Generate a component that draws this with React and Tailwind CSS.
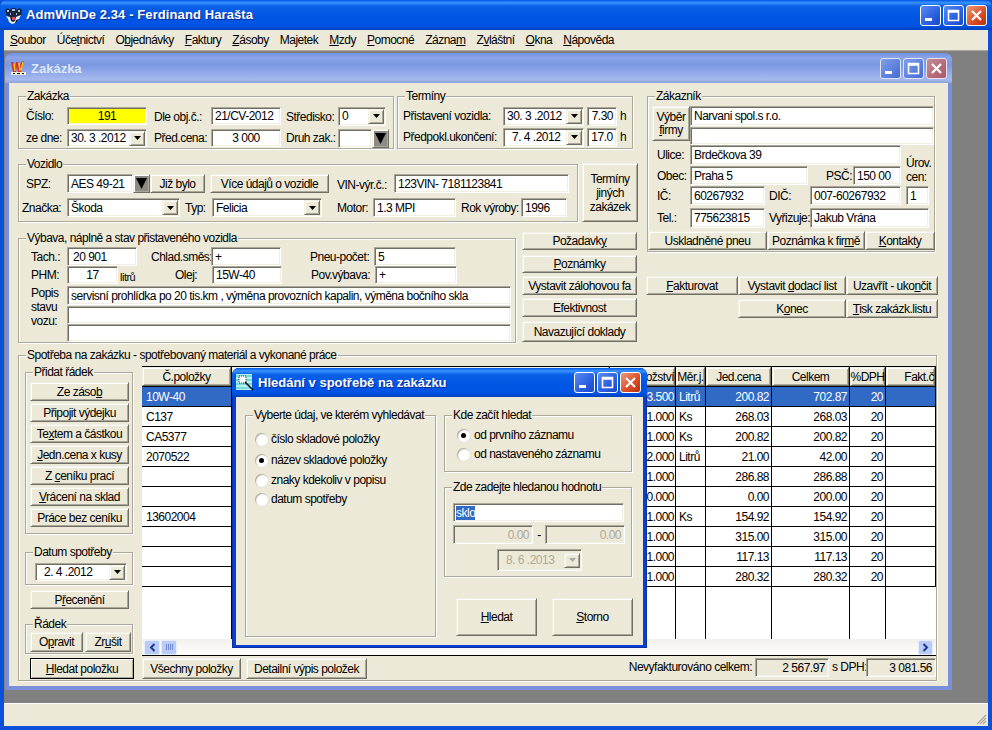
import React from "react";

// classic XP edges
const SUNKEN = "border border-t-[#aca899] border-l-[#aca899] border-r-white border-b-white shadow-[inset_1px_1px_0_#716f64,inset_-1px_-1px_0_#f1efe2]";
const RAISED = "border border-t-[#f1efe2] border-l-[#f1efe2] border-r-[#716f64] border-b-[#716f64] shadow-[inset_1px_1px_0_#fff,inset_-1px_-1px_0_#aca899]";

const Lbl = ({ className = "", children }) => (
  <span className={`shrink-0 whitespace-nowrap ${className}`}>{children}</span>
);

const U = ({ children }) => <span className="underline underline-offset-1">{children}</span>;

const Field = ({ className = "", children }) => (
  <div className={`shrink-0 flex items-center px-[3px] whitespace-nowrap overflow-hidden ${SUNKEN} ${className}`}>
    {children}
  </div>
);

const Btn = ({ className = "", children }) => (
  <div className={`shrink-0 flex items-center justify-center text-center whitespace-nowrap bg-[#ece9d8] ${RAISED} ${className}`}>
    {children}
  </div>
);

const Arrow = ({ gray }) => (
  <svg width="7" height="4" viewBox="0 0 7 4"><path d="M0 0h7L3.5 4z" fill={gray ? "#aca899" : "#000"} /></svg>
);

// field with the small drop-down button on its right
const Combo = ({ className = "", gray, children }) => (
  <div className={`shrink-0 flex items-center pl-[3px] pr-[1px] whitespace-nowrap bg-white ${SUNKEN} ${className}`}>
    <span className="flex-1">{children}</span>
    <div className={`w-[16px] h-[15px] flex items-center justify-center bg-[#ece9d8] ${RAISED}`}>
      <Arrow gray={gray} />
    </div>
  </div>
);

const BlackDrop = () => (
  <div className={`shrink-0 w-[17px] h-[19px] flex items-center justify-center bg-[#8c8a82] ${RAISED}`}>
    <svg width="11" height="11" viewBox="0 0 11 11"><path d="M0 0h11L5.5 11z" fill="#000" /></svg>
  </div>
);

const Group = ({ title, className = "", children }) => (
  <div className={`relative shrink-0 border border-[#aca899] shadow-[1px_1px_0_#fff,inset_1px_1px_0_#fff] ${className}`}>
    <span className="absolute left-[7px] top-[-8px] bg-[#ece9d8] px-[1px] leading-[14px] whitespace-nowrap">{title}</span>
    {children}
  </div>
);

const CapBtn = ({ kind, tone }) => {
  const bg = {
    blue: "bg-[linear-gradient(135deg,#5b8cf2,#2a5fe0_60%,#1c46c8)] border-white",
    red: "bg-[linear-gradient(135deg,#ee9a78,#db4a26_60%,#b8300f)] border-white",
    dimBlue: "bg-[linear-gradient(135deg,#7fa0ea,#5c80dc_60%,#4a6ad0)] border-[#dfe6f8]",
    dimRed: "bg-[linear-gradient(135deg,#c58d98,#b56a78_60%,#a65a6c)] border-[#e8dfe8]",
  }[tone];
  return (
    <div className={`w-[21px] h-[21px] rounded-[3px] border flex items-center justify-center ${bg}`}>
      <svg width="13" height="13" viewBox="0 0 13 13">
        {kind === "min" && <rect x="1" y="9" width="7" height="3" fill="#fff" />}
        {kind === "max" && <path d="M1.5 1.5h10v10h-10zM1.5 3h10" stroke="#fff" strokeWidth="1.6" fill="none" />}
        {kind === "close" && <path d="M2 2l9 9M11 2l-9 9" stroke="#fff" strokeWidth="2.2" />}
      </svg>
    </div>
  );
};

const CapBtns = ({ dim }) => (
  <div className="ml-auto flex gap-[2px]">
    <CapBtn kind="min" tone={dim ? "dimBlue" : "blue"} />
    <CapBtn kind="max" tone={dim ? "dimBlue" : "blue"} />
    <CapBtn kind="close" tone={dim ? "dimRed" : "red"} />
  </div>
);

const AppIcon = () => (
  <svg width="17" height="17" viewBox="0 0 17 17" className="shrink-0">
    <path d="M0 3l3-2 2 2 2-2h3l2 2 2-2 3 2-1 6-3 2-1 4-3 1-3-1-1-4-3-2z" fill="#1c2438" />
    <path d="M2 3h2v2H2zM7 2h3v2H7zM13 3h2v2h-2zM5 6h1v2H5zM11 6h1v2h-1z" fill="#9fc0f0" />
    <path d="M1 9l4 1 1 4 2 1 2-1 1-4 5-2-2 4-3 1-1 3-3 1-3-2-1-3z" fill="#eef2fa" />
    <path d="M7 10h3v3H7z" fill="#d05068" />
  </svg>
);

const WIcon = () => (
  <svg width="17" height="16" viewBox="0 0 17 16" className="shrink-0">
    <path d="M1 2l2 10h3l1-6 1 6h3l3-11-3 1-2 6-1-6H6L5 9 3 2z" fill="#d8301c" />
    <path d="M4 4l1 7M9 3l1 8M13 2l-2 8" stroke="#f8c820" strokeWidth="1.4" />
    <path d="M1 12h15v3H1z" fill="#f4f0d8" />
    <path d="M3 13h2v1H3zM7 13h3v1H7zM12 13h2v1h-2z" fill="#111" />
  </svg>
);

const WandIcon = () => (
  <svg width="18" height="18" viewBox="0 0 18 18" className="shrink-0">
    <rect x="0" y="0" width="16" height="16" fill="#b8f0f0" />
    <path d="M0 2h16M0 6h16M0 10h16M0 14h16" stroke="#30c0c8" strokeWidth="1" />
    <path d="M3 2h7v7H3z" fill="#fff" stroke="#333" strokeWidth="1" strokeDasharray="1 1" />
    <path d="M9 8l8 8" stroke="#000" strokeWidth="1.4" />
  </svg>
);

const Radio = ({ on }) => (
  <div className="shrink-0 w-[13px] h-[13px] rounded-full bg-white flex items-center justify-center shadow-[inset_1px_1px_1px_#aca899,0_0_1px_#d8d4c4]">
    {on && <div className="w-[5px] h-[5px] rounded-full bg-black" />}
  </div>
);

const COLS = "grid grid-cols-[90px_378px_66px_30px_66px_78px_36px_50px]";

const ROWS = [
  ["10W-40", "3.500", "Litrů", "200.82", "702.87", "20"],
  ["C137", "1.000", "Ks", "268.03", "268.03", "20"],
  ["CA5377", "1.000", "Ks", "200.82", "200.82", "20"],
  ["2070522", "2.000", "Litrů", "21.00", "42.00", "20"],
  ["", "1.000", "", "286.88", "286.88", "20"],
  ["", "0.000", "", "0.00", "200.00", "20"],
  ["13602004", "1.000", "Ks", "154.92", "154.92", "20"],
  ["", "1.000", "", "315.00", "315.00", "20"],
  ["", "1.000", "", "117.13", "117.13", "20"],
  ["", "1.000", "", "280.32", "280.32", "20"],
];

const HEADS = [
  ["Č.položky", "justify-center"],
  ["", "justify-center"],
  ["Množství", "justify-end"],
  ["Měr.j.", "justify-center"],
  ["Jed.cena", "justify-center"],
  ["Celkem", "justify-center"],
  ["%DPH", "justify-center"],
  ["Fakt.č", "justify-end"],
];

const ItemsGrid = () => (
  <div className="relative w-[794px] h-[290px] bg-white border-t border-black flex flex-col overflow-hidden">
    <div className={`${COLS} h-[20px] border-b border-black`}>
      {HEADS.map(([h, align], i) => (
        <div key={i} className={`flex items-center overflow-hidden whitespace-nowrap bg-[#ece9d8] border-r border-black ${align}`}>
          <div className={`w-full h-full flex items-center ${align} ${RAISED}`}>{h}</div>
        </div>
      ))}
    </div>
    {ROWS.map((r, i) => {
      const sel = i === 0;
      const cell = `h-[20px] flex items-center border-b border-r border-black whitespace-nowrap ${sel ? "bg-[#316ac5] text-white" : ""}`;
      return (
        <div key={i} className={COLS}>
          <div className={`${cell} pl-[4px]`}>{r[0]}</div>
          <div className={cell}></div>
          <div className={`${cell} justify-end pr-[1px]`}>{r[1]}</div>
          <div className={`${cell} pl-[3px]`}>{r[2]}</div>
          <div className={`${cell} justify-end pr-[2px]`}>{r[3]}</div>
          <div className={`${cell} justify-end pr-[2px]`}>{r[4]}</div>
          <div className={`${cell} justify-end pr-[2px]`}>{r[5]}</div>
          <div className={cell}></div>
        </div>
      );
    })}
    <div className={`${COLS} flex-1`}>
      {HEADS.map((_, i) => <div key={i} className="border-r border-black last:border-r-0" />)}
    </div>
    <div className="h-[17px] flex items-center px-[2px] bg-[linear-gradient(180deg,#f3f1ec,#fefefb)] border-b border-black">
      <div className="w-[16px] h-[15px] rounded-[2px] flex items-center justify-center bg-[#b9ccf8] border border-[#e6ecfc]">
        <svg width="7" height="9" viewBox="0 0 7 9"><path d="M5.5 1L2 4.5 5.5 8" stroke="#1c3a90" strokeWidth="2" fill="none" /></svg>
      </div>
      <div className="w-[16px] h-[15px] ml-[1px] rounded-[2px] flex items-center justify-center bg-[#b9ccf8] border border-[#e6ecfc]">
        <svg width="7" height="6" viewBox="0 0 7 6"><path d="M.5 0v6M2.5 0v6M4.500 0v6M6.500 0v6" stroke="#6f88d0" strokeWidth="1" /></svg>
      </div>
      <div className="ml-auto mr-[1px] w-[15px] h-[15px] rounded-[2px] flex items-center justify-center bg-[#b9ccf8] border border-[#e6ecfc]">
        <svg width="7" height="9" viewBox="0 0 7 9"><path d="M1.500 1L5 4.500 1.500 8" stroke="#1c3a90" strokeWidth="2" fill="none" /></svg>
      </div>
    </div>
  </div>
);

const SearchDialog = () => (
  <div className="absolute left-[232px] top-[368px] w-[415px] h-[280px] flex flex-col rounded-t-[7px] bg-[#0a3fd0] shadow-[inset_0_0_0_1px_#0a2fa8]">
    <div className="h-[29px] pl-[4px] pr-[6px] flex items-center gap-[4px] rounded-t-[7px] text-white font-bold text-[13px] tracking-[0px] bg-[linear-gradient(180deg,#0058e6_0%,#3a93ff_10%,#0a61e6_22%,#0054e3_60%,#0055e5_85%,#0042c0_100%)]">
      <WandIcon />
      <span className="whitespace-nowrap [text-shadow:1px_1px_0_#0a2a90]">Hledání v spotřebě na zakázku</span>
      <CapBtns />
    </div>
    <div className="mx-[4px] mb-[3px] flex-1 bg-[#ece9d8] flex pl-[9px] pt-[18px]">
      <Group title="Vyberte údaj, ve kterém vyhledávat" className="w-[191px] h-[222px] pl-[9px] pt-[16px]">
        <div className="flex flex-col">
          <div className="flex items-center gap-[3px] h-[14px]"><Radio /><span>číslo skladové položky</span></div>
          <div className="flex items-center gap-[3px] h-[14px] mt-[7px]"><Radio on /><span>název skladové položky</span></div>
          <div className="flex items-center gap-[3px] h-[14px] mt-[6px]"><Radio /><span>znaky kdekoliv v popisu</span></div>
          <div className="flex items-center gap-[3px] h-[14px] mt-[5px]"><Radio /><span>datum spotřeby</span></div>
        </div>
      </Group>
      <div className="ml-[8px] flex flex-col">
        <Group title="Kde začít hledat" className="w-[188px] h-[57px] pl-[12px] pt-[12px]">
          <div className="flex items-center gap-[4px] h-[14px]"><Radio on /><span>od prvního záznamu</span></div>
          <div className="flex items-center gap-[4px] h-[14px] mt-[5px]"><Radio /><span>od nastaveného záznamu</span></div>
        </Group>
        <Group title="Zde zadejte hledanou hodnotu" className="mt-[15px] w-[188px] h-[90px] pl-[8px] pt-[15px]">
          <Field className="w-[171px] h-[19px] bg-white !pl-[2px]">
            <span className="bg-[#316ac5] text-white">sklo</span>
          </Field>
          <div className="flex items-center mt-[3px] text-[#aca899]">
            <Field className="w-[80px] h-[19px] justify-end">0.00</Field>
            <span className="w-[12px] text-center text-black">-</span>
            <Field className="w-[80px] h-[19px] justify-end">0.00</Field>
          </div>
          <Combo gray className="ml-[44px] mt-[5px] w-[85px] h-[22px] !bg-[#ece9d8] text-[#aca899] pl-[8px]">8. 6 .2013</Combo>
        </Group>
        <div className="mt-[21px] ml-[12px] flex gap-[15px]">
          <Btn className="w-[81px] h-[38px]"><span><U>H</U>ledat</span></Btn>
          <Btn className="w-[81px] h-[38px]"><span><U>S</U>torno</span></Btn>
        </div>
      </div>
    </div>
  </div>
);

const MENU = [
  ["S", "oubor"], ["Úče", "t", "nictví"], ["O", "b", "jednávky"], ["F", "aktury"], ["Z", "ásoby"],
  ["Ma", "j", "etek"], ["M", "zdy"], ["P", "omocné"], ["Zázna", "m"], ["Z", "v", "láštní"], ["O", "kna"], ["N", "ápověda"],
];

const MenuItem = ({ m }) => {
  if (m.length === 3) return <span>{m[0]}<U>{m[1]}</U>{m[2]}</span>;
  if (m[0].length === 1) return <span><U>{m[0]}</U>{m[1]}</span>;
  return <span>{m[0]}<U>{m[1]}</U></span>;
};

const TopLeft = () => (
  <div className="w-[620px] shrink-0">
    <div className="flex gap-[3px]">
      <Group title="Zakázka" className="w-[376px] h-[53px] pl-[7px] pt-[10px]">
        <div className="flex items-center h-[18px]">
          <Lbl className="w-[41px]">Číslo:</Lbl>
          <Field className="w-[80px] h-[18px] bg-[#ffff00] justify-center">191</Field>
          <Lbl className="w-[57px] ml-[7px] pt-[2px]">Dle obj.č.:</Lbl>
          <Field className="w-[70px] h-[18px] bg-white">21/CV-2012</Field>
          <Lbl className="w-[52px] ml-[5px] pt-[2px]">Středisko:</Lbl>
          <Combo className="w-[48px] h-[19px]">0</Combo>
        </div>
        <div className="flex items-center h-[18px] mt-[4px]">
          <Lbl className="w-[41px]">ze dne:</Lbl>
          <Combo className="w-[80px] h-[18px]">30. 3 .2012</Combo>
          <Lbl className="w-[57px] ml-[7px]">Před.cena:</Lbl>
          <Field className="w-[70px] h-[18px] bg-white justify-center">3 000</Field>
          <Lbl className="w-[52px] ml-[5px]">Druh zak.:</Lbl>
          <Field className="w-[34px] h-[19px] bg-white"></Field>
          <BlackDrop />
        </div>
      </Group>
      <Group title="Termíny" className="w-[236px] h-[53px] pl-[5px] pt-[10px]">
        <div className="flex items-center h-[18px]">
          <Lbl className="w-[100px]">Přistavení vozidla:</Lbl>
          <Combo className="w-[81px] h-[19px]">30. 3 .2012</Combo>
          <Field className="ml-[3px] w-[30px] h-[19px] bg-white justify-end">7.30</Field>
          <Lbl className="ml-[3px]">h</Lbl>
        </div>
        <div className="flex items-center h-[18px] mt-[3px]">
          <Lbl className="w-[100px]">Předpokl.ukončení:</Lbl>
          <Combo className="w-[81px] h-[19px] pl-[8px]">7. 4 .2012</Combo>
          <Field className="ml-[3px] w-[30px] h-[19px] bg-white justify-center">17.0</Field>
          <Lbl className="ml-[3px]">h</Lbl>
        </div>
      </Group>
    </div>

    <div className="flex mt-[15px]">
      <Group title="Vozidlo" className="w-[560px] h-[58px] pl-[3px] pt-[9px]">
        <div className="flex items-center h-[19px]">
          <Lbl className="w-[45px] pl-[4px]">SPZ:</Lbl>
          <Field className="w-[66px] h-[19px] bg-white">AES 49-21</Field>
          <BlackDrop />
          <Btn className="w-[55px] h-[19px]">Již bylo</Btn>
          <Btn className="ml-[5px] w-[119px] h-[19px]">Více údajů o vozidle</Btn>
          <Lbl className="ml-[8px] w-[57px] pt-[2px]">VIN-výr.č.:</Lbl>
          <Field className="w-[175px] h-[19px] bg-white">123VIN- 7181123841</Field>
        </div>
        <div className="flex items-center h-[19px] mt-[5px]">
          <Lbl className="w-[45px]">Značka:</Lbl>
          <Combo className="w-[113px] h-[19px]">Škoda</Combo>
          <Lbl className="ml-[5px] w-[27px]">Typ:</Lbl>
          <Combo className="w-[110px] h-[19px]">Felicia</Combo>
          <Lbl className="ml-[15px] w-[36px]">Motor:</Lbl>
          <Field className="w-[83px] h-[19px] bg-white">1.3 MPI</Field>
          <Lbl className="ml-[5px] w-[60px]">Rok výroby:</Lbl>
          <Field className="w-[46px] h-[19px] bg-white">1996</Field>
        </div>
      </Group>
      <Btn className="ml-[4px] mt-[-1px] w-[56px] h-[59px]">Termíny<br />jiných<br />zakázek</Btn>
    </div>

    <div className="flex mt-[10px]">
      <Group title="Výbava, náplně a stav přistaveného vozidla" className="mt-[6px] w-[498px] h-[105px] pl-[12px] pt-[8px]">
        <div className="flex items-center h-[19px]">
          <Lbl className="w-[36px]">Tach.:</Lbl>
          <Field className="w-[70px] h-[19px] bg-white pl-[5px]">20 901</Field>
          <Lbl className="ml-[14px] w-[60px]">Chlad.směs:</Lbl>
          <Field className="w-[70px] h-[19px] bg-white">+</Field>
          <Lbl className="ml-[29px] w-[64px]">Pneu-počet:</Lbl>
          <Field className="w-[82px] h-[19px] bg-white">5</Field>
        </div>
        <div className="flex items-center h-[18px]">
          <Lbl className="w-[36px]">PHM:</Lbl>
          <Field className="w-[51px] h-[18px] bg-white justify-center">17</Field>
          <Lbl className="ml-[2px] w-[40px] pt-[3px] text-[11px]">litrů</Lbl>
          <Lbl className="ml-[15px] w-[37px]">Olej:</Lbl>
          <Field className="w-[70px] h-[18px] bg-white">15W-40</Field>
          <Lbl className="ml-[29px] w-[64px]">Pov.výbava:</Lbl>
          <Field className="w-[82px] h-[18px] bg-white">+</Field>
        </div>
        <div className="flex mt-[2px]">
          <Lbl className="w-[36px]">Popis<br />stavu<br />vozu:</Lbl>
          <div className="flex flex-col">
            <Field className="w-[444px] h-[19px] bg-white">servisní prohlídka po 20 tis.km , výměna provozních kapalin, výměna bočního skla</Field>
            <Field className="w-[444px] h-[18px] bg-white mt-[1px]"></Field>
            <Field className="w-[444px] h-[18px] bg-white"></Field>
          </div>
        </div>
      </Group>
      <div className="ml-[6px] w-[115px] flex flex-col">
        <Btn className="h-[18px]"><span>Požadavk<U>y</U></span></Btn>
        <Btn className="h-[18px] mt-[5px]"><span><U>P</U>oznámky</span></Btn>
        <Btn className="h-[19px] mt-[3px]">Vystavit zálohovou fa</Btn>
        <Btn className="h-[19px] mt-[3px]">Efektivnost</Btn>
        <Btn className="h-[21px] mt-[4px]">Navazující doklady</Btn>
      </div>
    </div>
  </div>
);

const TopRight = () => (
  <div className="ml-[9px] w-[291px] shrink-0">
    <Group title="Zákazník" className="w-[288px] h-[156px] pt-[9px] pl-[4px]">
      <div className="flex items-start">
        <Btn className="w-[38px] h-[35px] leading-[13px]"><span>Výběr<br /><U>f</U>irmy</span></Btn>
        <div className="flex flex-col">
          <Field className="w-[244px] h-[20px] bg-white">Narvani spol.s r.o.</Field>
          <Field className="w-[244px] h-[18px] bg-white mt-[1px]"></Field>
        </div>
      </div>
      <div className="flex">
        <div className="flex flex-col">
          <div className="flex items-center h-[20px]">
            <Lbl className="w-[38px] pl-[5px]">Ulice:</Lbl>
            <Field className="w-[211px] h-[20px] bg-white">Brdečkova 39</Field>
          </div>
          <div className="flex items-center h-[19px] mt-[1px]">
            <Lbl className="w-[38px] pl-[5px]">Obec:</Lbl>
            <Field className="w-[118px] h-[19px] bg-white">Praha 5</Field>
            <Lbl className="w-[45px] text-right pr-[1px]">PSČ:</Lbl>
            <Field className="w-[48px] h-[19px] bg-white">150 00</Field>
          </div>
        </div>
        <Lbl className="ml-[5px] mt-[11px]">Úrov.<br />cen:</Lbl>
      </div>
      <div className="flex items-center h-[19px] mt-[1px]">
        <Lbl className="w-[38px] pl-[5px]">IČ:</Lbl>
        <Field className="w-[75px] h-[19px] bg-white">60267932</Field>
        <Lbl className="ml-[4px] w-[41px]">DIČ:</Lbl>
        <Field className="w-[91px] h-[19px] bg-white">007-60267932</Field>
        <Field className="ml-[5px] w-[23px] h-[19px] bg-white">1</Field>
      </div>
      <div className="flex items-center h-[20px] mt-[3px]">
        <Lbl className="w-[38px] pl-[5px]">Tel.:</Lbl>
        <Field className="w-[75px] h-[20px] bg-white">775623815</Field>
        <Lbl className="ml-[4px] w-[41px]">Vyřizuje:</Lbl>
        <Field className="w-[119px] h-[20px] bg-white">Jakub Vrána</Field>
      </div>
      <div className="flex mt-[3px] -ml-[4px]">
        <Btn className="w-[119px] h-[19px]">Uskladněné pneu</Btn>
        <Btn className="w-[98px] h-[19px]"><span>Poznámka k fir<U>m</U>ě</span></Btn>
        <Btn className="w-[70px] h-[19px]"><span><U>K</U>ontakty</span></Btn>
      </div>
    </Group>
    <div className="flex mt-[24px] -ml-[1px]">
      <Btn className="w-[92px] h-[19px]"><span><U>F</U>akturovat</span></Btn>
      <Btn className="w-[108px] h-[19px]"><span>Vystavit <U>d</U>odací list</span></Btn>
      <Btn className="w-[92px] h-[19px]"><span>Uzavřít - uko<U>n</U>čit</span></Btn>
    </div>
    <div className="flex justify-end mt-[4px]">
      <Btn className="w-[108px] h-[19px]"><span>K<U>o</U>nec</span></Btn>
      <Btn className="w-[92px] h-[19px]"><span><U>T</U>isk zakázk.listu</span></Btn>
    </div>
  </div>
);

const Consumption = () => (
  <Group title="Spotřeba na zakázku - spotřebovaný materiál a vykonané práce" className="ml-[9px] mt-[12px] w-[919px] h-[326px] pt-[10px]">
    <div className="flex h-[290px]">
      <div className="w-[123px] shrink-0 pl-[6px] pt-[6px]">
        <Group title="Přidat řádek" className="w-[108px] h-[162px] pl-[4px] pt-[9px]">
          <div className="flex flex-col gap-[2px] w-[99px]">
            <Btn className="h-[19px]"><span>Ze záso<U>b</U></span></Btn>
            <Btn className="h-[19px]">Připojit výdejku</Btn>
            <Btn className="h-[19px]"><span>Te<U>x</U>tem a částkou</span></Btn>
            <Btn className="h-[19px]"><span><U>J</U>edn.cena x kusy</span></Btn>
            <Btn className="h-[19px]"><span>Z <U>c</U>eníku prací</span></Btn>
            <Btn className="h-[19px]"><span><U>V</U>rácení na sklad</span></Btn>
            <Btn className="h-[19px]">Práce bez ceníku</Btn>
          </div>
        </Group>
        <Group title="Datum spotřeby" className="mt-[18px] w-[108px] h-[33px] pl-[9px] pt-[10px]">
          <Combo className="w-[92px] h-[18px] pl-[8px]">2. 4 .2012</Combo>
        </Group>
        <Btn className="ml-[5px] mt-[5px] w-[99px] h-[19px]"><span>P<U>ř</U>ecenění</span></Btn>
        <Group title="Řádek" className="mt-[15px] w-[108px] h-[30px] pl-[4px] pt-[7px]">
          <div className="flex gap-[2px]">
            <Btn className="w-[53px] h-[20px]"><span>O<U>p</U>ravit</span></Btn>
            <Btn className="w-[46px] h-[20px]"><span>Zr<U>u</U>šit</span></Btn>
          </div>
        </Group>
      </div>
      <ItemsGrid />
    </div>
    <div className="flex items-start mt-[2px] pl-[11px]">
      <Btn className="w-[104px] h-[21px] !border-black"><span><U>H</U>ledat položku</span></Btn>
      <Btn className="ml-[8px] w-[99px] h-[21px]">Všechny položky</Btn>
      <Btn className="ml-[5px] w-[121px] h-[21px]">Detailní výpis položek</Btn>
      <Lbl className="ml-auto leading-[18px]">Nevyfakturováno celkem:</Lbl>
      <Field className="ml-[3px] w-[74px] h-[19px] justify-end">2 567.97</Field>
      <Lbl className="ml-[3px] w-[34px] leading-[18px]">s DPH:</Lbl>
      <Field className="w-[70px] h-[19px] justify-end">3 081.56</Field>
    </div>
  </Group>
);

export default function App() {
  return (
    <div className="relative w-[992px] h-[730px] overflow-hidden flex flex-col text-[12px] leading-[14px] tracking-[-0.5px] text-black bg-[#0a50d8] font-['Liberation_Sans',Arial,sans-serif]">
      {/* main title bar */}
      <div className="h-[30px] shrink-0 pl-[5px] pr-[5px] flex items-center gap-[4px] rounded-t-[7px] text-white font-bold text-[13px] tracking-[0.1px] bg-[linear-gradient(180deg,#0058e6_0%,#3a93ff_9%,#0a61e6_20%,#0054e3_60%,#0055e5_85%,#0042c0_100%)]">
        <AppIcon />
        <span className="whitespace-nowrap [text-shadow:1px_1px_0_#0a2a90]">AdmWinDe 2.34 - Ferdinand Harašta</span>
        <CapBtns />
      </div>

      <div className="mx-[4px] flex-1 flex flex-col bg-[#ece9d8]">
        {/* menu */}
        <div className="h-[21px] shrink-0 pl-[6px] flex items-center gap-[11px] border-b border-[#aca899]">
          {MENU.map((m, i) => <MenuItem key={i} m={m} />)}
        </div>

        {/* MDI area */}
        <div className="flex-1 bg-[#808080] pt-[2px] pl-[1px]">
          <div className="w-[947px] h-[637px] flex flex-col rounded-t-[7px] bg-[#7a8fdc]">
            <div className="h-[30px] shrink-0 pl-[5px] pr-[5px] flex items-center gap-[4px] rounded-t-[7px] bg-[linear-gradient(180deg,#6f8fe0_0%,#8aa4e8_15%,#7b98e2_40%,#a5b9ee_88%,#8ea3dc_100%)]">
              <WIcon />
              <span className="pt-[2px] text-[#dde6f8] font-bold text-[13px] tracking-[0px]">Zakázka</span>
              <CapBtns dim />
            </div>
            <div className="mx-[4px] mb-[4px] flex-1 bg-[#ece9d8] pt-[13px]">
              <div className="flex pl-[9px]">
                <TopLeft />
                <TopRight />
              </div>
              <Consumption />
            </div>
          </div>
        </div>

        {/* status bar */}
        <div className="h-[23px] shrink-0 relative border-t border-white">
          <svg width="12" height="12" viewBox="0 0 12 12" className="absolute right-[1px] bottom-[1px]">
            <path d="M11 2L2 11M11 5L5 11M11 8L8 11" stroke="#aca899" strokeWidth="1.2" />
          </svg>
        </div>
      </div>
      <div className="h-[4px] shrink-0" />

      <SearchDialog />
    </div>
  );
}
